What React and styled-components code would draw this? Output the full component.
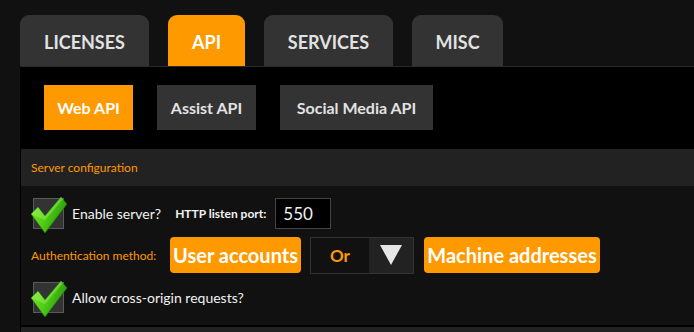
import React from "react";
import styled, { createGlobalStyle } from "styled-components";

const GlobalStyle = createGlobalStyle`
  html, body {
    margin: 0;
    padding: 0;
    background: #111111;
    font-family: Lato, "Open Sans", "Liberation Sans", sans-serif;
    overflow: hidden;
  }
`;

const Page = styled.div`
  width: 694px;
  height: 332px;
  background: #111111;
  display: flex;
  flex-direction: column;
  overflow: hidden;
`;

const TabBar = styled.div`
  display: flex;
  align-items: flex-end;
  gap: 19px;
  padding: 15px 0 0 20px;
  height: 51px;
`;

const Tab = styled.div`
  height: 51px;
  width: ${(p) => p.w}px;
  box-sizing: border-box;
  display: flex;
  align-items: center;
  justify-content: center;
  border-radius: 9px 9px 0 0;
  background: ${(p) => (p.active ? "#ff9900" : "#333333")};
  color: ${(p) => (p.active ? "#ffffff" : "#e2e2e2")};
  font-weight: 700;
  font-size: 18px;
  padding-top: 2px;
`;

const Panel = styled.div`
  margin-left: 20px;
  flex: 1;
  display: flex;
  flex-direction: column;
  border-top: 1px solid #2a2a2a;
  border-left: 1px solid #000;
`;

const SubTabBar = styled.div`
  background: #000;
  display: flex;
  gap: 24px;
  padding: 18px 0 19px 23px;
`;

const SubTab = styled.div`
  height: 45px;
  width: ${(p) => p.w}px;
  display: flex;
  align-items: center;
  justify-content: center;
  background: ${(p) => (p.active ? "#ff9900" : "#333333")};
  color: ${(p) => (p.active ? "#ffffff" : "#e2e2e2")};
  font-weight: 700;
  font-size: 16px;
`;

const SectionHeader = styled.div`
  background: #222222;
  height: 37px;
  display: flex;
  align-items: center;
  padding-left: 10px;
  color: #ff9900;
  font-size: 12px;
`;

const Content = styled.div`
  background: #111111;
  display: flex;
  flex-direction: column;
  padding: 11px 0 0 12px;
  height: 128px;
  border-bottom: 2px solid #000;
`;

const Row = styled.div`
  display: flex;
  align-items: center;
  height: ${(p) => p.h}px;
`;

const CheckWrap = styled.div`
  position: relative;
  width: 31px;
  height: 31px;
  box-sizing: border-box;
  background: #333333;
  border: 1px solid #5a5a5a;
  margin-right: 8px;
  flex-shrink: 0;

  svg {
    position: absolute;
    left: -6px;
    top: -5px;
  }
`;

const Label = styled.span`
  color: #f2f2f2;
  font-size: 14px;
  margin-right: ${(p) => p.mr || 0}px;
`;

const SmallLabel = styled.span`
  color: #f2f2f2;
  font-size: 12px;
  font-weight: 700;
  margin-right: 9px;
`;

const PortInput = styled.div`
  width: 56px;
  height: 31px;
  box-sizing: border-box;
  background: #000;
  border: 1px solid #444;
  color: #f2f2f2;
  font-size: 17px;
  display: flex;
  align-items: center;
  padding-left: 7px;
`;

const OrangeLabel = styled.span`
  color: #ff9900;
  font-size: 12px;
  width: 139px;
  flex-shrink: 0;
  margin-left: -2px;
`;

const OrangeButton = styled.div`
  height: 36px;
  width: ${(p) => p.w}px;
  display: flex;
  align-items: center;
  justify-content: center;
  border-radius: 4px;
  background: #ff9900;
  color: #ffffff;
  font-weight: 700;
  font-size: 20px;
  margin-right: ${(p) => p.mr || 0}px;
`;

const Select = styled.div`
  width: 104px;
  height: 37px;
  box-sizing: border-box;
  border: 1px solid #333;
  background: #111;
  display: flex;
  margin-right: 10px;
`;

const SelectValue = styled.div`
  flex: 1;
  display: flex;
  align-items: center;
  justify-content: center;
  color: #ff9900;
  font-weight: 700;
  font-size: 17px;
`;

const SelectArrow = styled.div`
  width: 44px;
  background: #222;
  display: flex;
  align-items: center;
  justify-content: center;
`;

const Footer = styled.div`
  flex: 1;
  background: #222;
`;

const Check = () => (
  <svg width="42" height="42" viewBox="0 0 42 42">
    <defs>
      <linearGradient id="cg" x1="0" y1="0.3" x2="1" y2="0.7">
        <stop offset="0" stopColor="#7ae82a" />
        <stop offset="0.45" stopColor="#4fcc14" />
        <stop offset="1" stopColor="#1f8a0a" />
      </linearGradient>
    </defs>
    <path
      d="M3 20 L10 13 L17 22 L33 3 L39 10 L17 39 Z"
      fill="url(#cg)"
      stroke="#1a6e08"
      strokeWidth="0.6"
      strokeLinejoin="round"
    />
    <path d="M3 20 L10 13 L17 22 L33 3 L35 5 L17 26 Z" fill="#a6f565" opacity="0.4" />
  </svg>
);

const CheckBox = () => (
  <CheckWrap>
    <Check />
  </CheckWrap>
);

export default function App() {
  return (
    <Page>
      <GlobalStyle />
      <TabBar>
        <Tab w={129}>LICENSES</Tab>
        <Tab w={77} active>
          API
        </Tab>
        <Tab w={129}>SERVICES</Tab>
        <Tab w={91}>MISC</Tab>
      </TabBar>
      <Panel>
        <SubTabBar>
          <SubTab w={89} active>
            Web API
          </SubTab>
          <SubTab w={99}>Assist API</SubTab>
          <SubTab w={153}>Social Media API</SubTab>
        </SubTabBar>
        <SectionHeader>Server configuration</SectionHeader>
        <Content>
          <Row h={32}>
            <CheckBox />
            <Label mr={14}>Enable server?</Label>
            <SmallLabel>HTTP listen port:</SmallLabel>
            <PortInput>550</PortInput>
          </Row>
          <Row h={52}>
            <OrangeLabel>Authentication method:</OrangeLabel>
            <OrangeButton w={131} mr={9}>
              User accounts
            </OrangeButton>
            <Select>
              <SelectValue>Or</SelectValue>
              <SelectArrow>
                <svg width="24" height="22" viewBox="0 0 24 22">
                  <path d="M1 1 L23 1 L12 21 Z" fill="#e6e6e6" />
                </svg>
              </SelectArrow>
            </Select>
            <OrangeButton w={176}>Machine addresses</OrangeButton>
          </Row>
          <Row h={32}>
            <CheckBox />
            <Label>Allow cross-origin requests?</Label>
          </Row>
        </Content>
        <Footer />
      </Panel>
    </Page>
  );
}
